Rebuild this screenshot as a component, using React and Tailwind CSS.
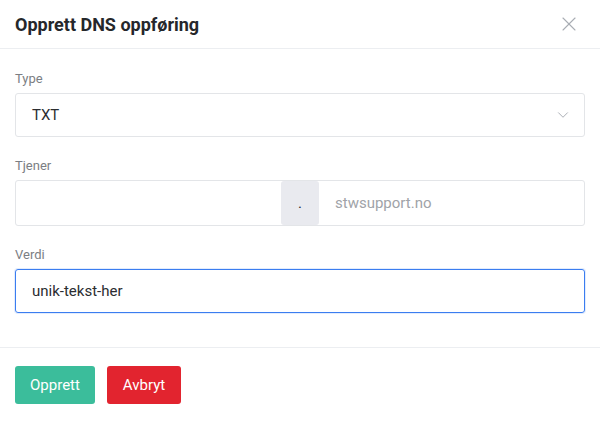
import React, { useState } from "react";
import { X, ChevronDown } from "lucide-react";

const Field = ({ label, children }) => (
  <div className="mb-[21px]">
    <label className="block text-[13px] leading-4 text-[#7b7e83] mb-[6px]">{label}</label>
    {children}
  </div>
);

const App = () => {
  const [verdi, setVerdi] = useState("unik-tekst-her");

  return (
    <div className="w-[600px] h-[421px] bg-white font-['Roboto',sans-serif] text-[#2b2d31]">
      <div className="h-[49px] flex items-center justify-between px-[15px] border-b border-[#eceef1]">
        <h1 className="text-[18px] font-bold text-[#25272b] pt-[1px]">Opprett DNS oppføring</h1>
        <X size={24} strokeWidth={1.1} className="text-[#a9adb4] mr-[4px]" />
      </div>

      <div className="px-[15px] pt-[22px] pb-[13px] border-b border-[#eceef1]">
        <Field label="Type">
          <div className="h-[44px] flex items-center justify-between border border-[#e3e5e8] rounded-[3px] pl-[16px] pr-[12px]">
            <span className="text-[15px]">TXT</span>
            <ChevronDown size={18} strokeWidth={1.2} className="text-[#a3a7ae]" />
          </div>
        </Field>

        <Field label="Tjener">
          <div className="h-[46px] flex border border-[#e3e5e8] rounded-[3px]">
            <div className="w-[265px]"></div>
            <div className="w-[38px] bg-[#e9eaef] rounded-[3px] flex items-center justify-center text-[15px]">.</div>
            <div className="flex-1 flex items-center pl-[16px] text-[15px] text-[#a0a3a8]">stwsupport.no</div>
          </div>
        </Field>

        <Field label="Verdi">
          <input
            value={verdi}
            onChange={(e) => setVerdi(e.target.value)}
            className="w-full h-[44px] border border-[#3b7df0] rounded-[3px] px-[16px] text-[15px] text-[#2b2d31] outline-none shadow-[0_0_0_1px_rgba(59,125,240,0.15)]"
          />
        </Field>
      </div>

      <div className="px-[15px] pt-[18px] flex gap-3">
        <button className="h-[38px] w-[80px] rounded-[3px] bg-[#3bbd9b] text-white text-[15px]">Opprett</button>
        <button className="h-[38px] w-[74px] rounded-[3px] bg-[#e2242f] text-white text-[15px]">Avbryt</button>
      </div>
    </div>
  );
};

export default App;
